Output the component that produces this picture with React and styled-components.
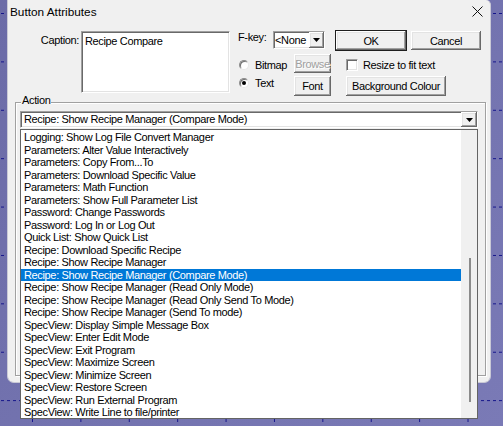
import React from 'react';
import styled, { createGlobalStyle } from 'styled-components';

const Global = createGlobalStyle`
  html, body { margin: 0; padding: 0; }
  body {
    width: 503px;
    height: 426px;
    overflow: hidden;
    background-color: #7272ad;
    background-image:
      conic-gradient(from 270deg at 3px 1px, #14148a 25%, transparent 0),
      conic-gradient(from 270deg at 1px 3px, #14148a 25%, transparent 0),
      linear-gradient(135deg, #6b6ba7, #7a7ab6);
    background-size: 6px 48.4px, 48.4px 426px, 100% 100%;
    background-position: 1px 13px, 32px 419px, 0 0;
    background-repeat: repeat, repeat-x, no-repeat;
    font-family: "Liberation Sans", Arial, sans-serif;
  }
`;

const Dialog = styled.div`
  margin-left: 7px;
  width: 484px;
  height: 383px;
  box-sizing: border-box;
  background: #f0f0f0;
  border: 1px solid #c9c9d6;
  border-top: none;
  border-radius: 0 5px 7px 7px;
  font-family: "Liberation Sans", Arial, sans-serif;
  font-size: 11px;
  letter-spacing: -0.35px;
  color: #000;
`;

const TitleBar = styled.div`
  height: 23px;
  display: flex;
  align-items: center;
  justify-content: space-between;
  padding: 0 7px 0 2px;
  font-size: 11.8px;
  letter-spacing: 0;
`;

const Body = styled.div`
  padding-top: 7px;
`;

const TopSection = styled.div`
  display: flex;
  align-items: flex-start;
  height: 67px;
`;

const CaptionLabel = styled.div`
  width: 72px;
  box-sizing: border-box;
  text-align: right;
  padding-right: 1px;
  margin-top: 4px;
  line-height: 12px;
`;

const sunken = `
  border: 1px solid;
  border-color: #a0a0a0 #ffffff #ffffff #a0a0a0;
  box-shadow: inset 1px 1px #696969, inset -1px -1px #e3e3e3;
`;

const raised = `
  box-shadow: inset -1px -1px #696969, inset 1px 1px #ffffff, inset -2px -2px #a0a0a0, inset 2px 2px #e3e3e3;
`;

const EditBox = styled.div`
  margin: 1px 0 0 1px;
  width: 149px;
  height: 62px;
  box-sizing: border-box;
  background: #fff;
  ${sunken}
  padding: 3px 3px;
  line-height: 12px;
`;

const MidCol = styled.div`
  margin-left: 8px;
  width: 94px;
  display: flex;
  flex-direction: column;
`;

const FkeyRow = styled.div`
  display: flex;
  align-items: flex-start;
  height: 18px;
  margin-top: 1px;
`;

const FkeyLabel = styled.div`
  width: 35px;
  line-height: 12px;
`;

const Select = styled.div`
  width: 52px;
  height: 18px;
  box-sizing: border-box;
  display: flex;
  background: #fff;
  ${sunken}
`;

const SelectText = styled.div`
  flex: 1;
  padding-left: 1px;
  line-height: 16px;
  overflow: hidden;
  white-space: nowrap;
`;

const DropBtn = styled.div`
  width: ${p => p.$w}px;
  height: 100%;
  box-sizing: border-box;
  background: #f0f0f0;
  display: flex;
  align-items: center;
  justify-content: center;
  ${raised}
`;

const Options = styled.div`
  display: flex;
  margin-top: 4px;
`;

const RadioCol = styled.div`
  width: 55px;
  display: flex;
  flex-direction: column;
  gap: 6px;
  padding-top: 6px;
`;

const RadioRow = styled.div`
  display: flex;
  align-items: center;
  gap: 6px;
  height: 12px;
  padding-left: 1px;
  line-height: 12px;
`;

const RadioDot = styled.span`
  width: 10px;
  height: 10px;
  box-sizing: border-box;
  border-radius: 50%;
  background: #fff;
  border: 1px solid;
  border-color: #8a8a8a #e8e8e8 #e8e8e8 #8a8a8a;
  box-shadow: inset 1px 1px #707070;
  display: flex;
  align-items: center;
  justify-content: center;
  &::after {
    content: '';
    width: 4px;
    height: 4px;
    border-radius: 50%;
    background: ${p => (p.$on ? '#000' : 'transparent')};
  }
`;

const BtnCol = styled.div`
  width: 39px;
  display: flex;
  flex-direction: column;
  gap: 1px;
`;

const Btn = styled.button`
  box-sizing: border-box;
  width: ${p => p.$w}px;
  height: ${p => p.$h}px;
  margin: 0;
  padding: 0;
  font-family: "Liberation Sans", Arial, sans-serif;
  font-size: 11px;
  letter-spacing: -0.35px;
  background: #f0f0f0;
  color: ${p => (p.disabled ? '#a0a0a0' : '#000')};
  text-shadow: ${p => (p.disabled ? '1px 1px #fff' : 'none')};
  border: 1px solid ${p => (p.$default ? '#1e1e1e' : '#f0f0f0')};
  ${raised}
  text-align: center;
`;

const RightCol = styled.div`
  margin-left: 3px;
  width: 147px;
  display: flex;
  flex-direction: column;
`;

const BtnRow = styled.div`
  display: flex;
  gap: 3px;
`;

const CheckRow = styled.div`
  display: flex;
  align-items: center;
  gap: 5px;
  height: 12px;
  margin: 8px 0 0 11px;
  line-height: 12px;
`;

const CheckBox = styled.span`
  width: 12px;
  height: 12px;
  box-sizing: border-box;
  background: #fff;
  ${sunken}
`;

const BgBtnWrap = styled.div`
  margin: 4px 0 0 10px;
`;

const Group = styled.div`
  margin: 5px 0 0 7px;
  width: 471px;
  height: 274px;
  box-sizing: border-box;
  border: 1px solid #a0a0a0;
  box-shadow: inset 1px 1px #fff, 1px 1px #fff;
`;

const GroupLabel = styled.div`
  width: fit-content;
  margin: -9px 0 0 5px;
  padding: 0 1px;
  background: #f0f0f0;
  line-height: 12px;
`;

const ComboWrap = styled.div`
  position: relative;
  margin: 5px 0 0 4px;
  width: 458px;
  height: 17px;
`;

const Combo = styled.div`
  width: 100%;
  height: 100%;
  box-sizing: border-box;
  display: flex;
  background: #fff;
  ${sunken}
`;

const ComboText = styled.div`
  flex: 1;
  padding-left: 3px;
  line-height: 15px;
  white-space: nowrap;
  overflow: hidden;
`;

const List = styled.div`
  position: absolute;
  top: 18px;
  left: 0;
  width: 458px;
  height: 290px;
  box-sizing: border-box;
  border: 1px solid #646464;
  background: #fff;
  display: flex;
  z-index: 2;
`;

const Items = styled.div`
  flex: 1;
  padding-top: 1px;
`;

const Item = styled.div`
  height: 12.5px;
  line-height: 12.5px;
  padding-left: 3px;
  white-space: nowrap;
  overflow: hidden;
  background: ${p => (p.$sel ? '#0078d7' : 'transparent')};
  color: ${p => (p.$sel ? '#fff' : '#000')};
`;

const ScrollTrack = styled.div`
  width: 16px;
  background: #f0f0f0;
  display: flex;
  flex-direction: column;
  align-items: center;
  padding-top: 128px;
`;

const Thumb = styled.div`
  width: 2px;
  height: 144px;
  background: #8b8b8b;
  margin-left: 1px;
`;

const Tri = () => (
  <svg width="7" height="4" viewBox="0 0 7 4">
    <polygon points="0,0 7,0 3.5,4" fill="#000" />
  </svg>
);

const CloseIcon = () => (
  <svg width="11" height="11" viewBox="0 0 11 11">
    <path d="M0.5 0.5 L10.5 10.5 M10.5 0.5 L0.5 10.5" stroke="#111" strokeWidth="1" />
  </svg>
);

const items = [
  'Logging: Show Log File Convert Manager',
  'Parameters: Alter Value Interactively',
  'Parameters: Copy From...To',
  'Parameters: Download Specific Value',
  'Parameters: Math Function',
  'Parameters: Show Full Parameter List',
  'Password: Change Passwords',
  'Password: Log In or Log Out',
  'Quick List: Show Quick List',
  'Recipe: Download Specific Recipe',
  'Recipe: Show Recipe Manager',
  'Recipe: Show Recipe Manager (Compare Mode)',
  'Recipe: Show Recipe Manager (Read Only Mode)',
  'Recipe: Show Recipe Manager (Read Only Send To Mode)',
  'Recipe: Show Recipe Manager (Send To mode)',
  'SpecView: Display Simple Message Box',
  'SpecView: Enter Edit Mode',
  'SpecView: Exit Program',
  'SpecView: Maximize Screen',
  'SpecView: Minimize Screen',
  'SpecView: Restore Screen',
  'SpecView: Run External Program',
  'SpecView: Write Line to file/printer',
];

export default function App() {
  const selected = 'Recipe: Show Recipe Manager (Compare Mode)';
  return (
    <>
      <Global />
      <Dialog>
        <TitleBar>
          <span>Button Attributes</span>
          <CloseIcon />
        </TitleBar>
        <Body>
          <TopSection>
            <CaptionLabel>Caption:</CaptionLabel>
            <EditBox>Recipe Compare</EditBox>
            <MidCol>
              <FkeyRow>
                <FkeyLabel>F-key:</FkeyLabel>
                <Select>
                  <SelectText>&lt;None</SelectText>
                  <DropBtn $w={15}><Tri /></DropBtn>
                </Select>
              </FkeyRow>
              <Options>
                <RadioCol>
                  <RadioRow><RadioDot />Bitmap</RadioRow>
                  <RadioRow><RadioDot $on />Text</RadioRow>
                </RadioCol>
                <BtnCol>
                  <Btn $w={39} $h={21} disabled>Browse</Btn>
                  <Btn $w={39} $h={22}>Font</Btn>
                </BtnCol>
              </Options>
            </MidCol>
            <RightCol>
              <BtnRow>
                <Btn $w={72} $h={21} $default>OK</Btn>
                <Btn $w={72} $h={21}>Cancel</Btn>
              </BtnRow>
              <CheckRow><CheckBox />Resize to fit text</CheckRow>
              <BgBtnWrap>
                <Btn $w={102} $h={22}>Background Colour</Btn>
              </BgBtnWrap>
            </RightCol>
          </TopSection>
          <Group>
            <GroupLabel>Action</GroupLabel>
            <ComboWrap>
              <Combo>
                <ComboText>{selected}</ComboText>
                <DropBtn $w={16}><Tri /></DropBtn>
              </Combo>
              <List>
                <Items>
                  {items.map(t => (
                    <Item key={t} $sel={t === selected}>{t}</Item>
                  ))}
                </Items>
                <ScrollTrack><Thumb /></ScrollTrack>
              </List>
            </ComboWrap>
          </Group>
        </Body>
      </Dialog>
    </>
  );
}
